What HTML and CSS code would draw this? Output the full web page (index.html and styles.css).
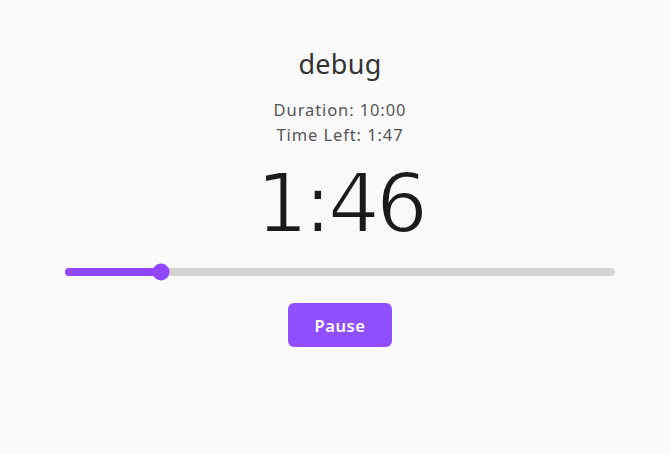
FILE: index.html
```html
<!DOCTYPE html>
<html>
<head>
<meta charset="utf-8">
<link rel="stylesheet" href="styles.css">
</head>
<body>
<main class="timer">
  <h1 class="title">debug</h1>
  <div class="info">
    <div>Duration: 10:00</div>
    <div>Time Left: 1:47</div>
  </div>
  <div class="clock">1:46</div>
  <div class="slider">
    <div class="fill" style="width: 17.5%"></div>
    <div class="thumb" style="left: 17.5%"></div>
  </div>
  <button class="btn">Pause</button>
</main>
</body>
</html>
```
FILE: styles.css
```css
html, body {
  margin: 0;
  padding: 0;
  background: #fafafa;
  height: 100%;
}
body {
  font-family: "Noto Sans", "Open Sans", sans-serif;
}
.timer {
  width: 550px;
  margin-left: 65px;
  padding-top: 44px;
  display: flex;
  flex-direction: column;
  align-items: center;
}
.title {
  margin: 0;
  font-size: 27px;
  font-weight: 400;
  color: #333;
  line-height: 40px;
  letter-spacing: 0.3px;
}
.info {
  margin-top: 13px;
  font-size: 16.5px;
  color: #555;
  line-height: 25px;
  text-align: center;
  letter-spacing: 0.9px;
}
.clock {
  margin-top: 9px;
  font-family: "DejaVu Sans", sans-serif;
  font-size: 82px;
  font-weight: 400;
  color: #1a1a1a;
  line-height: 96px;
  letter-spacing: -4px;
  -webkit-text-stroke: 2px #fafafa;
}
.slider {
  position: relative;
  width: 100%;
  height: 8px;
  margin-top: 16px;
  background: #d4d4d4;
  border-radius: 4px;
}
.fill {
  height: 100%;
  background: #9147ff;
  border-radius: 4px;
}
.thumb {
  position: absolute;
  top: 50%;
  width: 17px;
  height: 17px;
  border-radius: 50%;
  background: #9147ff;
  transform: translate(-50%, -50%);
}
.btn {
  margin-top: 27px;
  width: 104px;
  height: 44px;
  border: none;
  border-radius: 6px;
  background: #9150ff;
  color: #fff;
  font-family: "Noto Sans", sans-serif;
  font-size: 16.5px;
  font-weight: 600;
  letter-spacing: 0.6px;
}
```
